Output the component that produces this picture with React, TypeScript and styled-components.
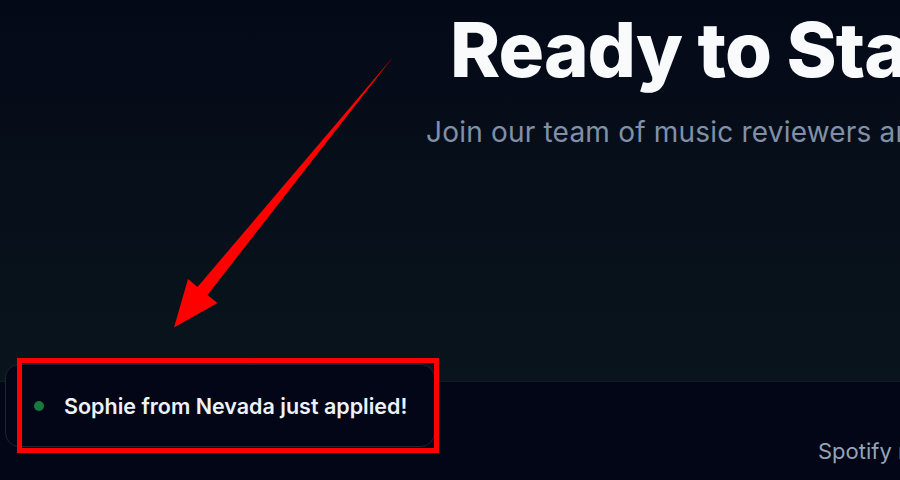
import styled, { createGlobalStyle } from 'styled-components';

const GlobalStyle = createGlobalStyle`
	html, body {
		margin: 0;
		padding: 0;
		background: #020617;
	}
	* {
		box-sizing: border-box;
	}
`;

const Page = styled.div`
	position: relative;
	width: 900px;
	height: 480px;
	overflow: hidden;
	display: flex;
	flex-direction: column;
	font-family: Inter, 'Noto Sans', sans-serif;
	background: #020617;
`;

const Hero = styled.section`
	height: 382px;
	flex-shrink: 0;
	padding: 7px 0 0 450px;
	background: linear-gradient(180deg, #040917 0%, #07101a 55%, #0a141c 100%);
	border-bottom: 1px solid #101b25;
	white-space: nowrap;
	overflow: hidden;
`;

const Title = styled.h1`
	margin: 0;
	font-family: Inter, sans-serif;
	font-weight: 800;
	font-size: 76px;
	line-height: 84px;
	letter-spacing: -1px;
	color: #f8fafc;
`;

const Subtitle = styled.p`
	margin: 25px 0 0 -24px;
	font-size: 28px;
	line-height: 32px;
	letter-spacing: 0.2px;
	color: #8090a8;
`;

const Footer = styled.footer`
	flex: 1;
	display: flex;
	justify-content: flex-start;
	align-items: flex-end;
	padding: 0 0 16px 818px;
	white-space: nowrap;
	overflow: hidden;
`;

const FooterText = styled.span`
	font-size: 22px;
	line-height: 26px;
	color: #94a3b8;
`;

const Toast = styled.div`
	position: absolute;
	left: 5px;
	top: 364px;
	width: 430px;
	height: 83px;
	display: flex;
	align-items: center;
	gap: 20px;
	padding-left: 28px;
	background: #020617;
	border: 1px solid #1c2533;
	border-radius: 14px;
`;

const Dot = styled.span`
	width: 10px;
	height: 10px;
	border-radius: 50%;
	background: #17793d;
	flex-shrink: 0;
`;

const ToastText = styled.span`
	font-size: 21.5px;
	font-weight: 600;
	color: #eef2f7;
`;

const Highlight = styled.div`
	position: absolute;
	left: 17px;
	top: 358px;
	width: 422px;
	height: 95px;
	border: 5px solid #ff0000;
	pointer-events: none;
`;

const Overlay = styled.svg`
	position: absolute;
	inset: 0;
	pointer-events: none;
`;

export default function App() {
	return (
		<>
			<GlobalStyle />
			<Page>
				<Hero>
					<Title>Ready to Start Reviewing?</Title>
					<Subtitle>Join our team of music reviewers and get paid to listen.</Subtitle>
				</Hero>
				<Footer>
					<FooterText>Spotify reviewer program</FooterText>
				</Footer>
				<Toast>
					<Dot />
					<ToastText>Sophie from Nevada just applied!</ToastText>
				</Toast>
				<Highlight />
				<Overlay width="900" height="480" viewBox="0 0 900 480">
					<polygon
						points="393,57 207.5,295 217.5,303 174,327.5 188,279 197.5,287"
						fill="#ff0000"
					/>
				</Overlay>
			</Page>
		</>
	);
}
